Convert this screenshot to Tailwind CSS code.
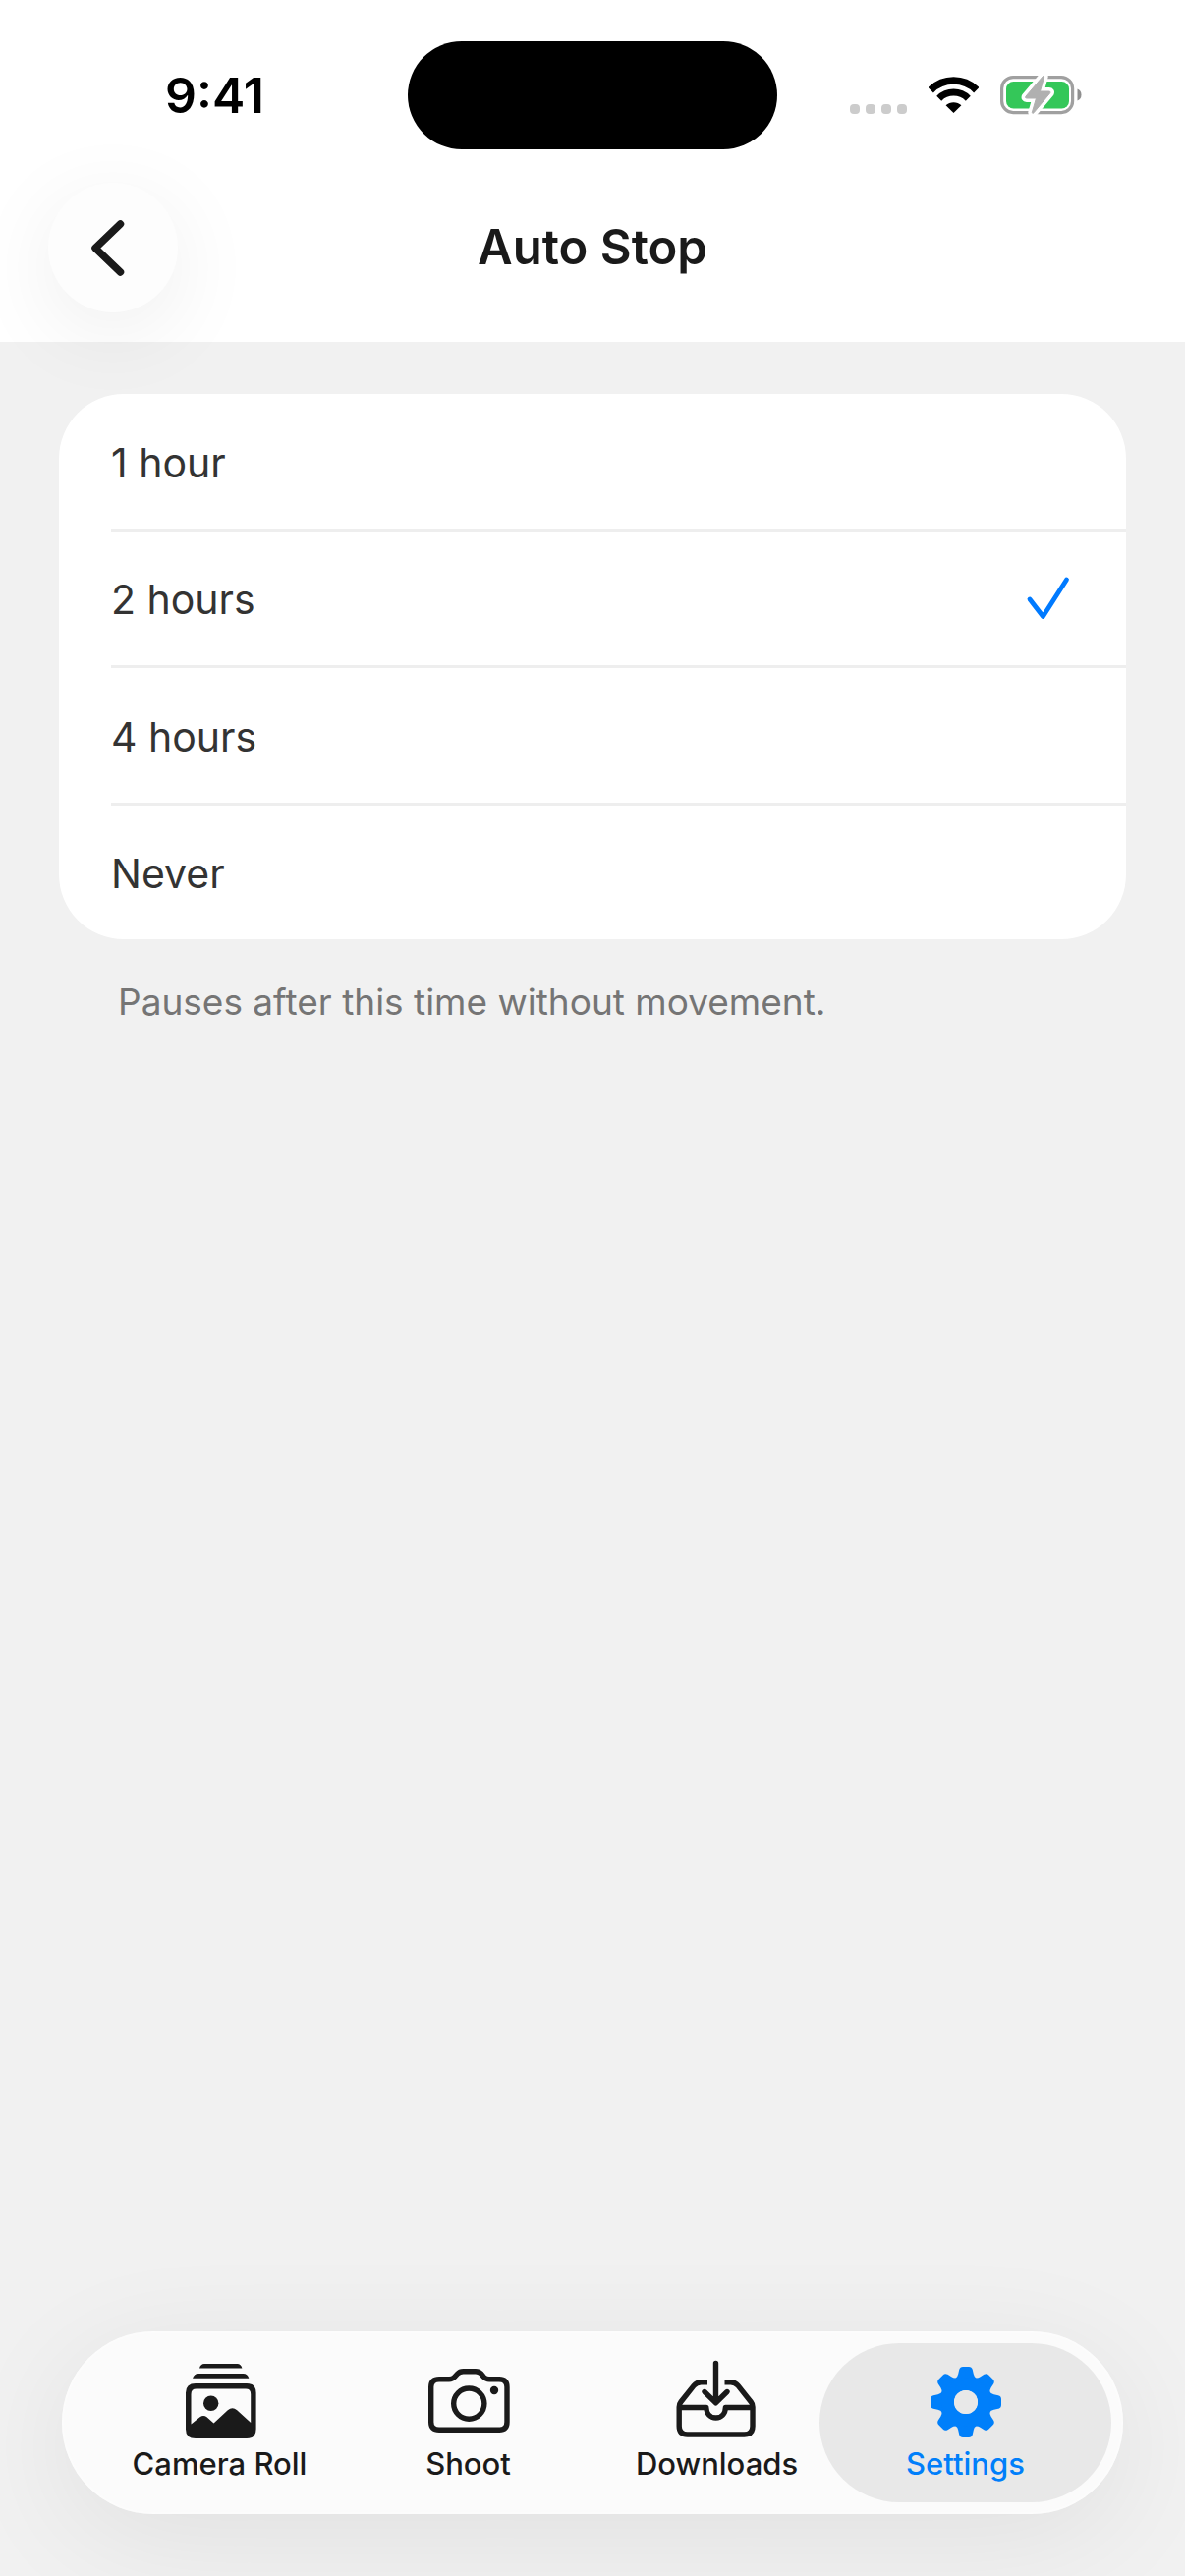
<!doctype html>
<html lang="en">
    <head>
        <meta charset="UTF-8" />
        <meta name="viewport" content="width=device-width, initial-scale=1.0" />
        <title>Auto Stop</title>
        <script src="https://cdn.jsdelivr.net/npm/@tailwindcss/browser@4"></script>
    </head>
    <body
        class="flex min-h-screen flex-col overflow-x-hidden bg-[#f1f1f1] font-['Inter',sans-serif] text-[#1a1a1a]"
    >
        <header class="bg-white pt-[42px] pb-[30px]">
            <!-- Status bar -->
            <div class="grid grid-cols-[1fr_376px_1fr] items-center">
                <time
                    class="pl-[22px] text-center text-[50px] leading-[60px] font-semibold text-black"
                    >9:41</time
                >
                <div class="h-[110px] rounded-full bg-black"></div>
                <div class="flex items-center justify-end gap-[22px] pr-[105px]">
                    <div class="flex gap-[6px] pt-[27px]">
                        <span class="size-[10px] rounded-[4px] bg-[#cccccc]"></span>
                        <span class="size-[10px] rounded-[4px] bg-[#cccccc]"></span>
                        <span class="size-[10px] rounded-[4px] bg-[#cccccc]"></span>
                        <span class="size-[10px] rounded-[4px] bg-[#cccccc]"></span>
                    </div>
                    <svg
                        class="h-[38px] w-[51px]"
                        viewBox="105 19 51 38"
                        fill="none"
                        stroke="#000"
                        aria-label="Wi-Fi"
                    >
                        <path
                            d="M107.2 32.7A33 33 0 0 1 153.8 32.7"
                            stroke-width="7.6"
                        />
                        <path
                            d="M115.7 41.2A21 21 0 0 1 145.3 41.2"
                            stroke-width="7"
                        />
                        <path
                            d="M130.5 56L122.6 48.3A11.5 11.5 0 0 1 138.4 48.3Z"
                            fill="#000"
                            stroke="none"
                        />
                    </svg>
                    <svg
                        class="h-[44px] w-[83px]"
                        viewBox="178 16 83 44"
                        fill="none"
                        aria-label="Battery charging"
                    >
                        <rect
                            x="179.6"
                            y="19.6"
                            width="72"
                            height="36"
                            rx="11.5"
                            stroke="#a0a0a0"
                            stroke-width="3.2"
                        />
                        <rect
                            x="184"
                            y="24"
                            width="64"
                            height="27.5"
                            rx="7.5"
                            fill="#34c759"
                        />
                        <path
                            d="M256.5 31.5Q260.5 33 260.5 37.5Q260.5 42 256.5 43.5Z"
                            fill="#8f8f8f"
                        />
                        <path
                            d="M221.5 18.5L203.8 39.3Q203 41 204.8 41H214.5L210.3 55.5Q210.5 57 212 55.8L228.8 35.7Q229.5 34 227.7 34H218.5L222.7 19Q222.6 17.6 221.5 18.5Z"
                            fill="#fff"
                            stroke="#fff"
                            stroke-width="8"
                            stroke-linejoin="round"
                        />
                        <path
                            d="M221.5 18.5L203.8 39.3Q203 41 204.8 41H214.5L210.3 55.5Q210.5 57 212 55.8L228.8 35.7Q229.5 34 227.7 34H218.5L222.7 19Q222.6 17.6 221.5 18.5Z"
                            fill="#b0b0b0"
                            stroke="#b0b0b0"
                            stroke-width="1"
                        />
                    </svg>
                </div>
            </div>

            <!-- Title bar -->
            <div
                class="mt-[34px] grid grid-cols-[132px_1fr_132px] items-center px-[49px]"
            >
                <button
                    type="button"
                    aria-label="Back"
                    class="relative size-[132px] rounded-full bg-[#fdfdfd] shadow-[0_20px_90px_rgba(0,0,0,0.07)]"
                >
                    <svg
                        class="size-[132px]"
                        viewBox="0 0 132 132"
                        fill="none"
                        stroke="currentColor"
                        stroke-width="7.5"
                        stroke-linecap="round"
                        stroke-linejoin="round"
                    >
                        <path d="M73.5 42L48 66.5L73.5 91" />
                    </svg>
                </button>
                <h1
                    id="page-title"
                    class="text-center text-[49px] leading-[60px] font-semibold"
                >
                    Auto Stop
                </h1>
            </div>
        </header>

        <main class="px-[60px] pt-[53px]">
            <div
                role="radiogroup"
                aria-labelledby="page-title"
                class="overflow-hidden rounded-[66px] bg-white pl-[53px] text-[41px] leading-[50px] text-[#333333]"
            >
                <label
                    class="flex h-[140px] items-center justify-between border-b-3 border-[#eeeeee] pt-[2px] pr-[55px]"
                >
                    <input type="radio" name="auto-stop" value="1" class="peer sr-only" />
                    <span>1 hour</span>
                    <svg
                        class="invisible h-[48px] w-[48px] peer-checked:visible"
                        viewBox="0 0 48 48"
                        fill="none"
                        stroke="#007aff"
                        stroke-width="4.8"
                        stroke-linecap="round"
                        stroke-linejoin="round"
                    >
                        <path d="M5 24L18.5 41.5L42.5 4" />
                    </svg>
                </label>
                <label
                    class="flex h-[139px] items-center justify-between border-b-3 border-[#eeeeee] pt-[2px] pr-[55px]"
                >
                    <input
                        type="radio"
                        name="auto-stop"
                        value="2"
                        class="peer sr-only"
                        checked
                    />
                    <span>2 hours</span>
                    <svg
                        class="invisible h-[48px] w-[48px] peer-checked:visible"
                        viewBox="0 0 48 48"
                        fill="none"
                        stroke="#007aff"
                        stroke-width="4.8"
                        stroke-linecap="round"
                        stroke-linejoin="round"
                    >
                        <path d="M5 24L18.5 41.5L42.5 4" />
                    </svg>
                </label>
                <label
                    class="flex h-[140px] items-center justify-between border-b-3 border-[#eeeeee] pt-[2px] pr-[55px]"
                >
                    <input type="radio" name="auto-stop" value="4" class="peer sr-only" />
                    <span>4 hours</span>
                    <svg
                        class="invisible h-[48px] w-[48px] peer-checked:visible"
                        viewBox="0 0 48 48"
                        fill="none"
                        stroke="#007aff"
                        stroke-width="4.8"
                        stroke-linecap="round"
                        stroke-linejoin="round"
                    >
                        <path d="M5 24L18.5 41.5L42.5 4" />
                    </svg>
                </label>
                <label
                    class="flex h-[136px] items-center justify-between pt-[2px] pr-[55px]"
                >
                    <input type="radio" name="auto-stop" value="never" class="peer sr-only" />
                    <span>Never</span>
                    <svg
                        class="invisible h-[48px] w-[48px] peer-checked:visible"
                        viewBox="0 0 48 48"
                        fill="none"
                        stroke="#007aff"
                        stroke-width="4.8"
                        stroke-linecap="round"
                        stroke-linejoin="round"
                    >
                        <path d="M5 24L18.5 41.5L42.5 4" />
                    </svg>
                </label>
            </div>
            <p class="mt-[39px] px-[60px] text-[37px] leading-[50px] text-[#757575]">
                Pauses after this time without movement.
            </p>
        </main>

        <!-- Tab bar -->
        <nav
            class="mx-[63px] mt-auto mb-[63px] grid grid-cols-4 rounded-full bg-[#fbfbfb] px-[34px] py-[12px] text-[31px] leading-[36px] font-medium shadow-[0_24px_120px_rgba(0,0,0,0.07),inset_0_0_4px_#ffffff]"
        >
            <a
                href="#"
                class="-mx-[22px] flex h-[162px] flex-col items-center gap-1 pt-[17px]"
            >
                <svg class="size-[84px]" viewBox="12 12 84 84" fill="currentColor">
                    <path d="M33 20.6Q34.2 16 38 16H71.5Q75.2 16 76.4 20.6Z" />
                    <path d="M26 30.8Q27.5 26 32 26H77.5Q82 26 83.3 30.8Z" />
                    <path
                        fill-rule="evenodd"
                        d="M29 36H81Q90.6 36 90.6 45.5V82.5Q90.6 92 81 92H29Q19 92 19 82.5V45.5Q19 36 29 36ZM30 41.6Q24.5 41.6 24.5 47V77.5L33.5 70.3Q37 67.8 40.5 70.3L47.5 76.6L61.8 63.2Q66.5 59.2 71.2 63.2L85.2 76V47Q85.2 41.6 80 41.6Z"
                    />
                    <circle cx="44.7" cy="56.2" r="7.7" />
                </svg>
                Camera Roll
            </a>
            <a
                href="#"
                class="-mx-[22px] flex h-[162px] flex-col items-center gap-1 pt-[17px]"
            >
                <svg
                    class="size-[84px]"
                    viewBox="15 12 84 84"
                    fill="none"
                    stroke="currentColor"
                    stroke-width="5.4"
                    stroke-linejoin="round"
                >
                    <path
                        d="M27 31.7H37Q40.5 31.7 42.5 29.5L45.5 26.2Q47.8 23.7 51.5 23.7H64Q67.5 23.7 69.8 26.2L72.5 29.5Q74.5 31.7 78 31.7H88Q96 31.7 96 39.7V75.3Q96 83.3 88 83.3H27Q18.7 83.3 18.7 75.3V39.7Q18.7 31.7 27 31.7Z"
                    />
                    <circle cx="57.3" cy="56.6" r="15.6" />
                    <circle cx="83" cy="43" r="4.2" fill="currentColor" stroke="none" />
                </svg>
                Shoot
            </a>
            <a
                href="#"
                class="-mx-[22px] flex h-[162px] flex-col items-center gap-1 pt-[17px]"
            >
                <svg
                    class="size-[84px]"
                    viewBox="13 12 84 84"
                    fill="none"
                    stroke="currentColor"
                    stroke-width="5.4"
                    stroke-linejoin="round"
                >
                    <path d="M53.5 15.5V55.5M42 44.5L53.5 55.8L65 44.5" stroke-linecap="round" />
                    <path
                        d="M45 34.7H38.5Q34 34.7 31 38.4L18 54.8Q16.2 57 16.2 60V79.5Q16.2 88 24.7 88H82.5Q91 88 91 79.5V60Q91 57 89.2 54.8L76.2 38.4Q73.2 34.7 68.7 34.7H62.5"
                    />
                    <path
                        d="M16.2 60.5H43.8C44 67 48 71 53.6 71S63.2 67 63.4 60.5H91"
                    />
                </svg>
                Downloads
            </a>
            <a
                href="#"
                aria-current="page"
                class="-mx-[22px] flex h-[162px] flex-col items-center gap-1 rounded-full bg-[#e8e8e8] pt-[17px] text-[#007ffa]"
            >
                <svg class="size-[84px]" viewBox="11 12 84 84" fill="currentColor">
                    <defs>
                        <path
                            id="tooth"
                            d="M42 31.2Q44.6 29.5 45.2 26.5L46.2 22Q47 19 50 19H56Q59 19 59.8 22L60.8 26.5Q61.4 29.5 64 31.2L60 40H46Z"
                        />
                    </defs>
                    <use href="#tooth" />
                    <use href="#tooth" transform="rotate(45 53 55)" />
                    <use href="#tooth" transform="rotate(90 53 55)" />
                    <use href="#tooth" transform="rotate(135 53 55)" />
                    <use href="#tooth" transform="rotate(180 53 55)" />
                    <use href="#tooth" transform="rotate(225 53 55)" />
                    <use href="#tooth" transform="rotate(270 53 55)" />
                    <use href="#tooth" transform="rotate(315 53 55)" />
                    <circle cx="53" cy="55" r="18.5" fill="none" stroke="currentColor" stroke-width="13" />
                    <circle cx="53" cy="55" r="12" fill="#e8e8e8" />
                </svg>
                Settings
            </a>
        </nav>
    </body>
</html>
